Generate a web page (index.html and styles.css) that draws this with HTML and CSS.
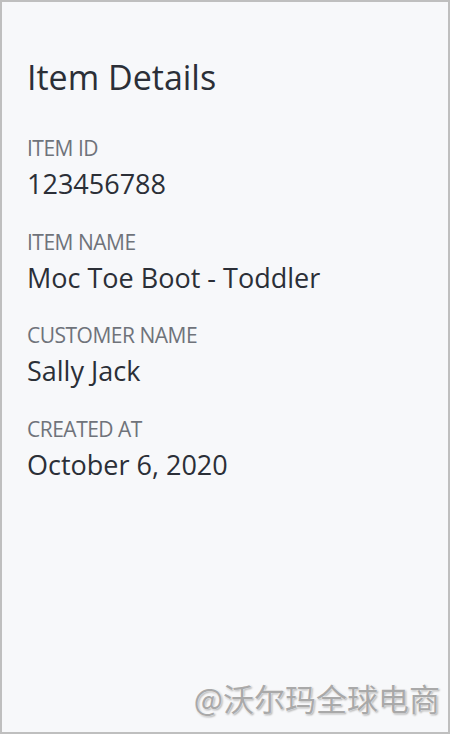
FILE: index.html
```html
<!DOCTYPE html>
<html lang="en">
<head>
<meta charset="utf-8">
<title>Item Details</title>
<link rel="stylesheet" href="styles.css">
</head>
<body>
<div class="card">
  <h1 class="title">Item Details</h1>
  <dl class="fields">
    <div class="field">
      <dt class="label">ITEM ID</dt>
      <dd class="value">123456788</dd>
    </div>
    <div class="field">
      <dt class="label">ITEM NAME</dt>
      <dd class="value">Moc Toe Boot - Toddler</dd>
    </div>
    <div class="field">
      <dt class="label">CUSTOMER NAME</dt>
      <dd class="value">Sally Jack</dd>
    </div>
    <div class="field">
      <dt class="label">CREATED AT</dt>
      <dd class="value">October 6, 2020</dd>
    </div>
  </dl>
  <div class="watermark">@沃尔玛全球电商</div>
</div>
</body>
</html>
```
FILE: styles.css
```css
html, body {
  margin: 0;
  padding: 0;
  background: #ffffff;
}
body {
  font-family: "Open Sans", "Noto Sans", "Noto Sans CJK SC", sans-serif;
  color: #2e3138;
}
.card {
  box-sizing: border-box;
  width: 450px;
  height: 734px;
  border: 2px solid #bfbfbf;
  background: #f7f8fa;
  padding: 53px 25px 14px 25px;
  display: flex;
  flex-direction: column;
}
.title {
  margin: 0;
  font-size: 34px;
  font-weight: 400;
  line-height: 44px;
  color: #2b2f37;
}
.fields {
  margin: 37px 0 0 0;
  display: flex;
  flex-direction: column;
  gap: 29.5px;
}
.field {
  display: flex;
  flex-direction: column;
  gap: 8px;
}
.label {
  font-size: 21px;
  line-height: 24px;
  color: #6f737a;
  letter-spacing: -0.5px;
}
.value {
  margin: 0;
  font-size: 27px;
  line-height: 32px;
  color: #2b2f37;
}
.watermark {
  margin-top: auto;
  align-self: flex-end;
  font-family: "Noto Sans CJK SC", sans-serif;
  font-size: 31px;
  line-height: 40px;
  color: #a9a9a9;
  text-shadow: 0 0 2px #ffffff, 0 0 2px #ffffff, 1px 1px 2px #8a8a8a;
  margin-right: -17px;
}
```
